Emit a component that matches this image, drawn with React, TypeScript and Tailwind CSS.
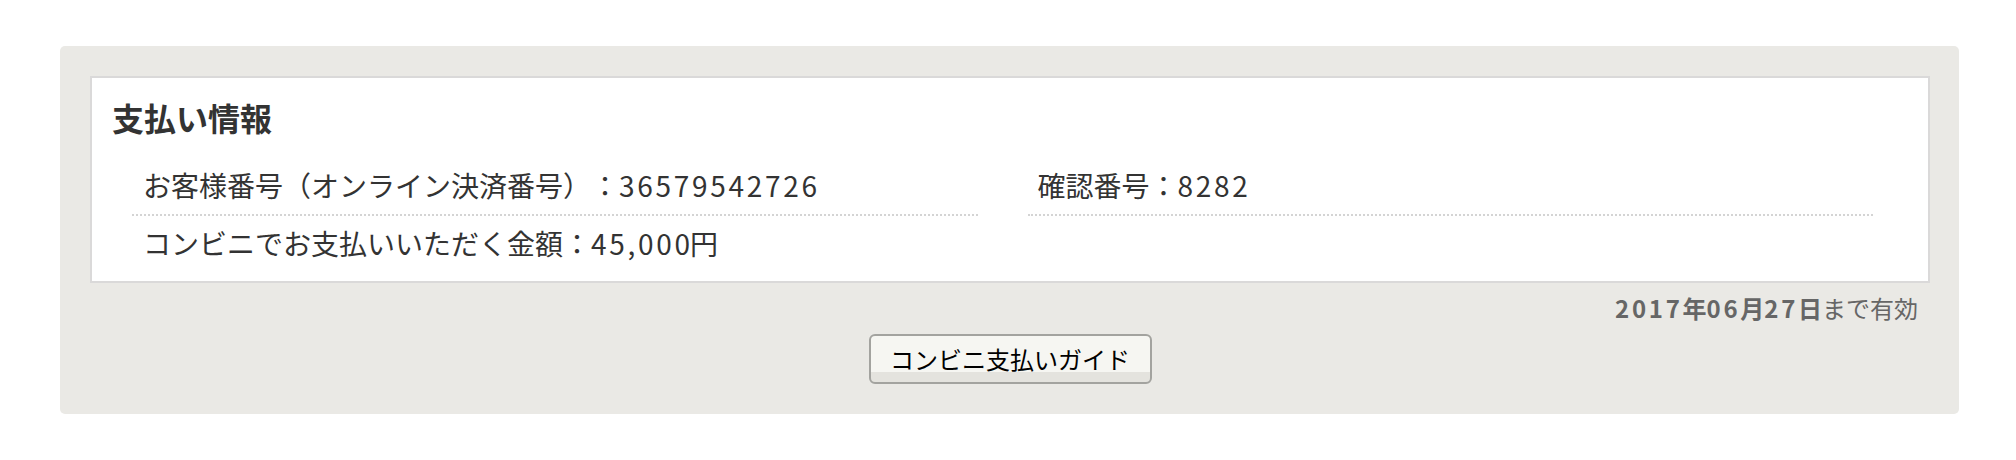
import React from "react";

const jp = "font-['Noto_Sans_CJK_JP',sans-serif] [text-spacing-trim:space-all]";

const Num = ({ children }: { children: React.ReactNode }) => (
  <span className="tracking-[2.7px]">{children}</span>
);

const App = () => {
  return (
    <div className={`bg-white min-h-screen pt-[46px] pl-[60px] ${jp}`}>
      <div className="w-[1899px] bg-[#eae9e5] rounded-[5px] pt-[30px] pl-[30px] pr-[29px] pb-[30px]">
        <div className="bg-white border-2 border-[#dad9d9] pt-[19px] pb-[9px] px-[20px]">
          <h2 className="text-[32px] leading-[40px] font-bold text-[#333] mb-[21px]">支払い情報</h2>
          <div className="grid grid-cols-2 gap-x-[50px] ml-[20px] mr-[35px] text-[28px] leading-[42px] text-[#333]">
            <div className="pl-[11px] pt-[6px] pb-[8px] border-b-2 border-dotted border-[#d4d4d4]">
              お客様番号（オンライン決済番号）：<Num>36579542726</Num>
            </div>
            <div className="pl-[10px] pt-[6px] pb-[8px] border-b-2 border-dotted border-[#d4d4d4]">
              確認番号：<Num>8282</Num>
            </div>
            <div className="pl-[11px] pt-[6px] pb-[8px]">
              コンビニでお支払いいただく金額：<Num>45,00</Num>0円
            </div>
            <div className="pt-[6px] pb-[8px]"></div>
          </div>
        </div>

        <div className="mt-[7px] pr-[12px] text-right text-[24px] leading-[36px] text-[#666]">
          <span className="font-bold">
            <Num>2017</Num>年<Num>06</Num>月<Num>27</Num>日
          </span>
          まで有効
        </div>

        <button className="block mx-auto mt-[8px] w-[283px] h-[50px] border-2 border-[#a3a39f] rounded-[6px] bg-[linear-gradient(#f6f6f2_36px,#e4e3de_36px)] text-[24px] leading-[30px] text-black">
          コンビニ支払いガイド
        </button>
      </div>
    </div>
  );
};

export default App;
